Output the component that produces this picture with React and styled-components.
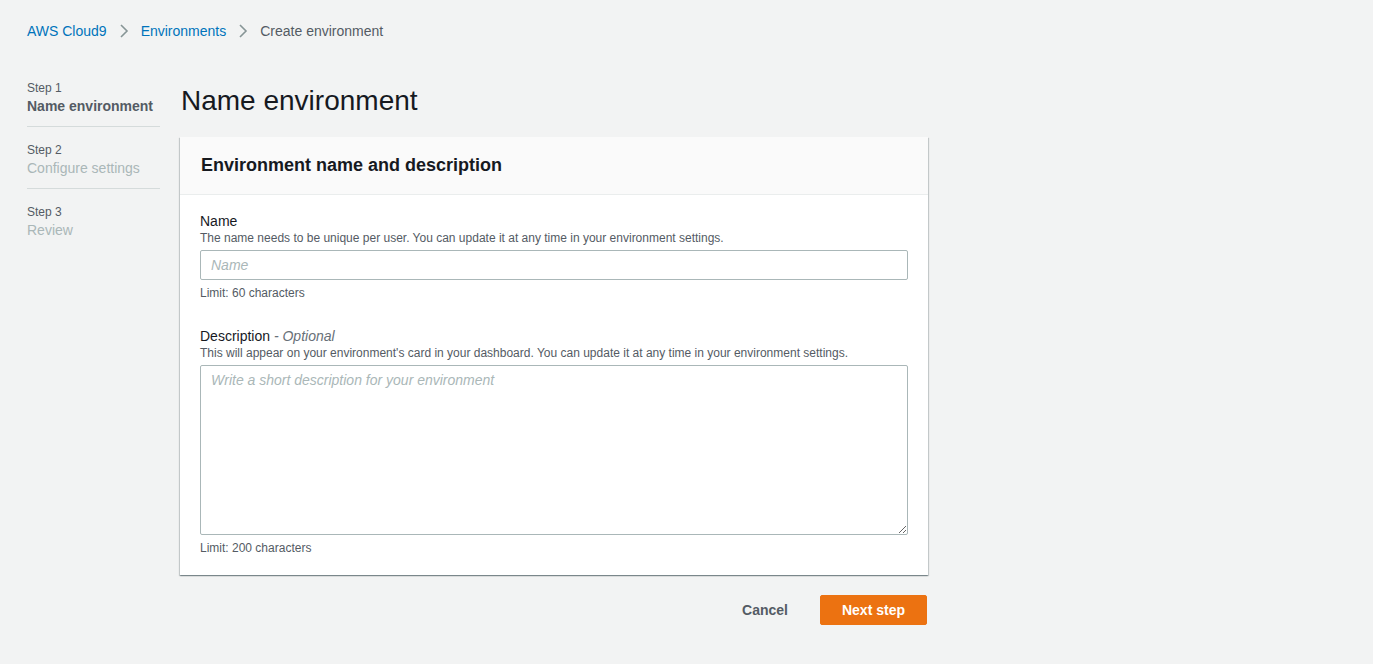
import React from 'react'
import styled, { createGlobalStyle } from 'styled-components'

const Global = createGlobalStyle`
  html, body { margin: 0; padding: 0; background: #f2f3f3; }
  body { font-family: "Liberation Sans", Arial, sans-serif; color: #16191f; }
  * { box-sizing: border-box; }
`

const Page = styled.div`
  padding: 21px 27px;
  min-height: 664px;
`

const Crumbs = styled.nav`
  display: flex;
  align-items: center;
  font-size: 14px;
  height: 20px;
`

const Crumb = styled.span`
  color: ${(p) => (p.current ? '#545b64' : '#0073bb')};
`

const Sep = styled.span`
  display: inline-flex;
  margin: 0 12px;
  color: #879596;
`

const Layout = styled.div`
  display: flex;
  margin-top: 39px;
  gap: 20px;
`

const Side = styled.aside`
  width: 133px;
  flex-shrink: 0;
`

const StepItem = styled.div`
  padding: 5px 0 10px;
  border-bottom: ${(p) => (p.last ? 'none' : '1px solid #d5dbdb')};
  margin-bottom: 10px;
  &:first-child { padding-top: 0; }
`

const StepNum = styled.div`
  font-size: 12px;
  color: #545b64;
  line-height: 16px;
`

const StepName = styled.div`
  font-size: 14px;
  line-height: 20px;
  color: ${(p) => (p.active ? '#545b64' : '#aab7b8')};
  font-weight: ${(p) => (p.active ? 700 : 400)};
`

const Main = styled.main`
  width: 748px;
`

const Title = styled.h1`
  font-size: 28px;
  font-weight: 400;
  margin: 4px 0 19px 1px;
  line-height: 34px;
`

const Card = styled.section`
  background: #fff;
  box-shadow: 0 1px 1px 0 rgba(0, 28, 36, 0.3), 1px 1px 1px 0 rgba(0, 28, 36, 0.15), -1px 1px 1px 0 rgba(0, 28, 36, 0.15);
`

const CardHead = styled.div`
  background: #fafafa;
  border-bottom: 1px solid #eaeded;
  height: 58px;
  padding: 0 21px;
  display: flex;
  align-items: center;
  font-size: 18px;
  font-weight: 700;
`

const CardBody = styled.div`
  padding: 17px 20px 20px;
`

const Field = styled.div`
  & + & { margin-top: 27px; }
`

const Label = styled.div`
  font-size: 14px;
  line-height: 18px;
`

const Optional = styled.i`
  color: #687078;
`

const Hint = styled.div`
  font-size: 12px;
  color: #545b64;
  line-height: 16px;
  margin-bottom: 4px;
`

const Input = styled.input`
  width: 100%;
  height: 30px;
  border: 1px solid #aab7b8;
  border-radius: 2px;
  padding: 0 10px;
  font: italic 14px "Liberation Sans", Arial, sans-serif;
  &::placeholder { color: #aab7b8; }
`

const Area = styled.textarea`
  display: block;
  width: 100%;
  height: 170px;
  border: 1px solid #aab7b8;
  border-radius: 2px;
  padding: 6px 10px;
  font: italic 14px "Liberation Sans", Arial, sans-serif;
  &::placeholder { color: #aab7b8; }
`

const Limit = styled.div`
  font-size: 12px;
  color: #545b64;
  margin-top: 6px;
`

const Actions = styled.div`
  display: flex;
  justify-content: flex-end;
  align-items: center;
  margin-top: 20px;
  padding-right: 1px;
  gap: 10px;
`

const Button = styled.button`
  height: 30px;
  padding: 0 21px;
  border-radius: 2px;
  font: 700 14px "Liberation Sans", Arial, sans-serif;
  border: 1px solid ${(p) => (p.primary ? '#ec7211' : 'transparent')};
  background: ${(p) => (p.primary ? '#ec7211' : 'transparent')};
  color: ${(p) => (p.primary ? '#fff' : '#545b64')};
`

const Chevron = () => (
  <svg width="10" height="16" viewBox="0 0 10 16" fill="none" stroke="currentColor" strokeWidth="1.6">
    <path d="M2 2l6 6-6 6" />
  </svg>
)

export default function App() {
  return (
    <Page>
      <Global />
      <Crumbs>
        <Crumb>AWS Cloud9</Crumb>
        <Sep><Chevron /></Sep>
        <Crumb>Environments</Crumb>
        <Sep><Chevron /></Sep>
        <Crumb current>Create environment</Crumb>
      </Crumbs>
      <Layout>
        <Side>
          <StepItem>
            <StepNum>Step 1</StepNum>
            <StepName active>Name environment</StepName>
          </StepItem>
          <StepItem>
            <StepNum>Step 2</StepNum>
            <StepName>Configure settings</StepName>
          </StepItem>
          <StepItem last>
            <StepNum>Step 3</StepNum>
            <StepName>Review</StepName>
          </StepItem>
        </Side>
        <Main>
          <Title>Name environment</Title>
          <Card>
            <CardHead>Environment name and description</CardHead>
            <CardBody>
              <Field>
                <Label>Name</Label>
                <Hint>The name needs to be unique per user. You can update it at any time in your environment settings.</Hint>
                <Input placeholder="Name" />
                <Limit>Limit: 60 characters</Limit>
              </Field>
              <Field>
                <Label>Description <Optional>- Optional</Optional></Label>
                <Hint>This will appear on your environment's card in your dashboard. You can update it at any time in your environment settings.</Hint>
                <Area placeholder="Write a short description for your environment" />
                <Limit>Limit: 200 characters</Limit>
              </Field>
            </CardBody>
          </Card>
          <Actions>
            <Button>Cancel</Button>
            <Button primary>Next step</Button>
          </Actions>
        </Main>
      </Layout>
    </Page>
  )
}
